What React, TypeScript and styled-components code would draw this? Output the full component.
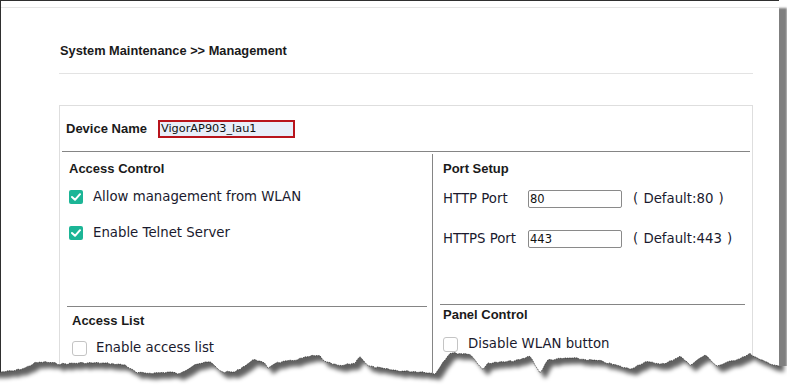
import React from "react"
import styled, { createGlobalStyle } from "styled-components"

const GlobalStyle = createGlobalStyle`
  html, body {
    margin: 0;
    padding: 0;
    background: #ffffff;
    overflow: hidden;
  }
`

const Stage = styled.div`
  position: relative;
  width: 787px;
  height: 387px;
  overflow: hidden;
  background: #fff;
`

const Paper = styled.div`
  width: 778px;
  height: 386px;
  border-top: 1px solid #2f2f2f;
  border-left: 1px solid #2f2f2f;
  background: #fff;
  box-shadow: 8px 8px 2px rgba(0, 0, 0, 0.5);
  color: #1c1c1c;
`

const TopRule = styled.div`
  margin-top: 6px;
  border-top: 1px solid #e6e6e6;
`

const Content = styled.div`
  margin-left: 58px;
  width: 694px;
`

const Header = styled.div`
  margin-top: 35px;
  padding: 0 0 14px 1px;
  border-bottom: 1px solid #e3e3e3;
`

const Title = styled.h1`
  margin: 0;
  font: bold 12.8px/16px "Liberation Sans", Arial, sans-serif;
  color: #1a1a1a;
`

const Box = styled.div`
  margin-top: 31px;
  border: 1px solid #dedede;
  border-bottom: none;
  padding: 0 2px;
  height: 300px;
`

const DeviceRow = styled.div`
  display: flex;
  align-items: center;
  height: 45px;
  padding-left: 4px;
  border-bottom: 1px solid #858585;
`

const BoldLabel = styled.span`
  font: bold 13px/16px "Liberation Sans", Arial, sans-serif;
  color: #1a1a1a;
`

const DeviceLabel = styled(BoldLabel)`
  width: 92px;
`

const NameInput = styled.div`
  box-sizing: border-box;
  width: 137px;
  height: 18px;
  border: 2px solid #b8141c;
  background: #e8eef9;
  padding-left: 1px;
  font: 11.3px/14px "DejaVu Sans", Verdana, sans-serif;
  color: #111;
`

const Columns = styled.div`
  display: grid;
  grid-template-columns: 370px 1fr;
  padding-top: 2px;
`

const Column = styled.div<{ $divider?: boolean }>`
  display: flex;
  flex-direction: column;
  border-left: ${(p) => (p.$divider ? "1px solid #858585" : "none")};
  height: 260px;
`

const Upper = styled.div<{ $h: number; $pl: number }>`
  box-sizing: border-box;
  flex: none;
  height: ${(p) => p.$h}px;
  padding: 7px 0 0 ${(p) => p.$pl}px;
  display: flex;
  flex-direction: column;
`

const Lower = styled.div<{ $ml: number; $mr: number; $pt: number; $pl: number; $gap: number }>`
  margin: 0 ${(p) => p.$mr}px 0 ${(p) => p.$ml}px;
  border-top: 1px solid #858585;
  padding: ${(p) => p.$pt}px 0 0 ${(p) => p.$pl}px;
  display: flex;
  flex-direction: column;
  gap: ${(p) => p.$gap}px;
`

const CheckList = styled.div`
  display: flex;
  flex-direction: column;
  gap: 16px;
  margin-top: 10px;
`

const CheckRow = styled.div<{ $gap: number }>`
  display: flex;
  align-items: center;
  gap: ${(p) => p.$gap}px;
  height: 20px;
`

const Box14 = styled.span<{ $on?: boolean }>`
  box-sizing: border-box;
  display: inline-flex;
  align-items: center;
  justify-content: center;
  width: ${(p) => (p.$on ? 14 : 15)}px;
  height: ${(p) => (p.$on ? 14 : 15)}px;
  background: ${(p) => (p.$on ? "#1cb596" : "#fff")};
  border: ${(p) => (p.$on ? "none" : "1px solid #c4c4c4")};
  border-radius: ${(p) => (p.$on ? 2 : 3)}px;
`

const Text = styled.span`
  font: 13.3px/16px "DejaVu Sans", Verdana, sans-serif;
  color: #1a1a2e;
  white-space: nowrap;
`

const PortList = styled.div`
  display: flex;
  flex-direction: column;
  gap: 22px;
  margin-top: 13px;
`

const PortRow = styled.div`
  display: flex;
  align-items: center;
  height: 18px;
`

const PortLabel = styled(Text)`
  width: 85px;
`

const PortInput = styled.div`
  box-sizing: border-box;
  width: 94px;
  height: 18px;
  border: 1px solid #8a8a8a;
  border-radius: 2px;
  padding-left: 1px;
  font: 11.5px/16px "DejaVu Sans", Verdana, sans-serif;
  color: #111;
`

const Hint = styled(Text)`
  margin-left: 11px;
  word-spacing: 1px;
`

const TearOverlay = styled.svg`
  position: absolute;
  left: 0;
  top: 330px;
`

const Check = () => (
  <svg width="10" height="8" viewBox="0 0 10 8">
    <polyline points="1,4 4,6.8 9,1.2" fill="none" stroke="#fff" strokeWidth="2" strokeLinecap="round" strokeLinejoin="round" />
  </svg>
)

const Checkbox = ({ on }: { on?: boolean }) => <Box14 $on={on}>{on && <Check />}</Box14>

const base: [number, number][] = [
  [0, 372], [13, 371], [25, 368], [35, 363], [45, 362], [60, 364], [80, 363], [100, 363], [115, 364],
  [125, 365], [137, 373], [155, 373], [170, 372], [180, 374], [195, 364], [210, 362], [222, 372],
  [235, 372], [255, 359], [265, 364], [268, 368], [275, 363], [290, 361], [312, 356], [320, 356],
  [325, 362], [340, 366], [355, 363], [360, 356], [368, 366], [385, 369], [400, 371], [425, 372],
  [435, 374], [443, 362], [450, 353], [470, 354], [480, 366], [483, 370], [488, 363], [505, 362],
  [520, 360], [530, 356], [540, 373], [548, 360], [570, 358], [600, 361], [630, 369], [645, 362],
  [665, 364], [680, 356], [690, 365], [705, 355], [717, 366], [735, 360], [750, 354], [760, 360],
  [775, 365], [779, 366],
]

function buildEdge() {
  const pts: [number, number][] = []
  let seed = 7
  const rnd = () => {
    seed = (seed * 9301 + 49297) % 233280
    return seed / 233280 - 0.5
  }
  for (let i = 0; i < base.length - 1; i++) {
    const [x0, y0] = base[i]
    const [x1, y1] = base[i + 1]
    const steps = Math.max(1, Math.round((x1 - x0) / 2.5))
    for (let s = 0; s < steps; s++) {
      const t = s / steps
      const j = i === 0 && s === 0 ? 0 : rnd() * 1.6
      pts.push([x0 + (x1 - x0) * t, y0 + (y1 - y0) * t + j])
    }
  }
  pts.push(base[base.length - 1])
  return pts
}

const edge = buildEdge()
const edgeStr = edge.map(([x, y]) => `${x.toFixed(1)},${y.toFixed(1)}`).join(" L")
const revStr = [...edge].reverse().map(([x, y]) => `${x.toFixed(1)},${y.toFixed(1)}`).join(" L")
const below = `M0,400 L0,372 L${edgeStr} L787,366 L787,400 Z`
const paperShape = `M-20,320 L779,320 L${revStr} L-20,372 Z`

const TornEdge = () => (
  <TearOverlay width="787" height="57" viewBox="0 330 787 57">
    <defs>
      <clipPath id="belowEdge">
        <path d={below} />
      </clipPath>
      <filter id="tearBlur" x="-5%" y="-50%" width="110%" height="200%">
        <feGaussianBlur stdDeviation="2.2" />
      </filter>
    </defs>
    <path d={below} fill="#fff" />
    <g clipPath="url(#belowEdge)">
      <path d={paperShape} fill="rgba(0,0,0,0.62)" transform="translate(5,6)" filter="url(#tearBlur)" />
    </g>
    <path d={`M${edgeStr}`} fill="none" stroke="#2a2a2a" strokeWidth="0.7" strokeDasharray="1.4 0.9" />
  </TearOverlay>
)

export default function App() {
  return (
    <Stage>
      <GlobalStyle />
      <Paper>
        <TopRule />
        <Content>
          <Header>
            <Title>System Maintenance &gt;&gt; Management</Title>
          </Header>
          <Box>
            <DeviceRow>
              <DeviceLabel>Device Name</DeviceLabel>
              <NameInput>VigorAP903_lau1</NameInput>
            </DeviceRow>
            <Columns>
              <Column>
                <Upper $h={152} $pl={7}>
                  <BoldLabel>Access Control</BoldLabel>
                  <CheckList>
                    <CheckRow $gap={10}>
                      <Checkbox on />
                      <Text>Allow management from WLAN</Text>
                    </CheckRow>
                    <CheckRow $gap={10}>
                      <Checkbox on />
                      <Text>Enable Telnet Server</Text>
                    </CheckRow>
                  </CheckList>
                </Upper>
                <Lower $ml={5} $mr={5} $pt={6} $pl={5} $gap={9}>
                  <BoldLabel>Access List</BoldLabel>
                  <CheckRow $gap={9}>
                    <Checkbox />
                    <Text>Enable access list</Text>
                  </CheckRow>
                </Lower>
              </Column>
              <Column $divider>
                <Upper $h={150} $pl={10}>
                  <BoldLabel>Port Setup</BoldLabel>
                  <PortList>
                    <PortRow>
                      <PortLabel>HTTP Port</PortLabel>
                      <PortInput>80</PortInput>
                      <Hint>( Default:80 )</Hint>
                    </PortRow>
                    <PortRow>
                      <PortLabel>HTTPS Port</PortLabel>
                      <PortInput>443</PortInput>
                      <Hint>( Default:443 )</Hint>
                    </PortRow>
                  </PortList>
                </Upper>
                <Lower $ml={7} $mr={5} $pt={2} $pl={3} $gap={11}>
                  <BoldLabel>Panel Control</BoldLabel>
                  <CheckRow $gap={10}>
                    <Checkbox />
                    <Text>Disable WLAN button</Text>
                  </CheckRow>
                </Lower>
              </Column>
            </Columns>
          </Box>
        </Content>
      </Paper>
      <TornEdge />
    </Stage>
  )
}
